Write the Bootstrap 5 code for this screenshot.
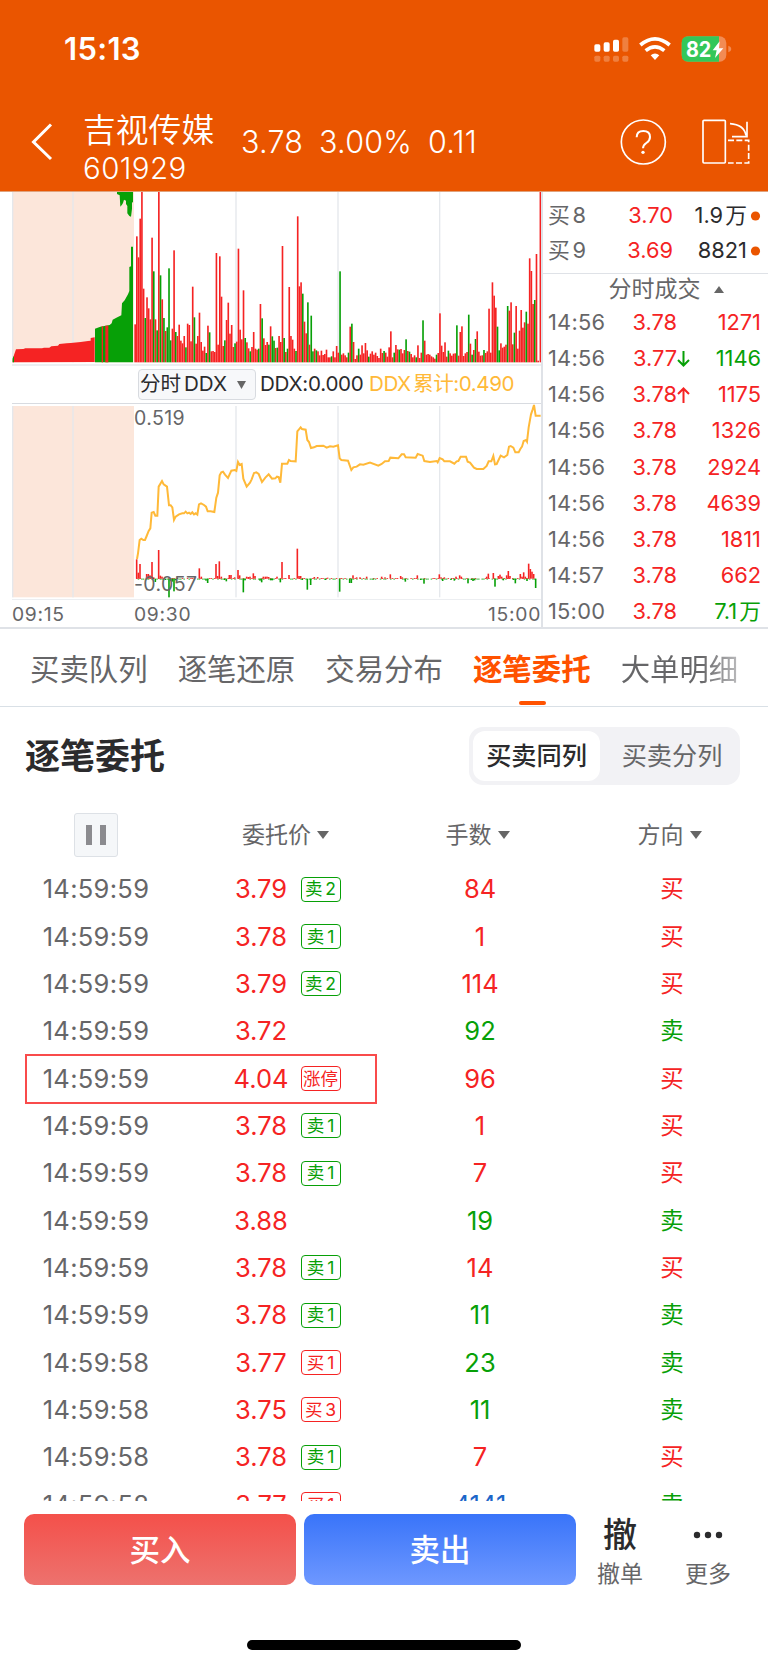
<!DOCTYPE html>
<html lang="zh-CN">
<head>
<meta charset="utf-8">
<meta name="viewport" content="width=device-width, initial-scale=1">
<title>吉视传媒 601929</title>
<link rel="stylesheet" href="https://cdn.jsdelivr.net/npm/bootstrap@5.3.0/dist/css/bootstrap.min.css">
<style>
:root{--up:#f52323;--down:#07a007;--ink:#2b2b2d;--dim:#666668;--rule:#dfe2e7}
body{font-family:Inter,"Noto Sans CJK SC",sans-serif;color:var(--ink);background:#fff;width:768px;height:1663px;overflow:hidden;line-height:1;font-feature-settings:"calt" 0}
svg{display:block;flex:none}
.up{color:var(--up)}.down{color:var(--down)}.dim{color:var(--dim)}.deal{color:#1b66c9}
.app-head{background:#ea5500;height:192px;color:#fff;border-bottom:1px solid #e0a27c}
.status-line{height:95px;padding:2px 36px 0 64px}
.clock{font-size:31px;font-weight:600;letter-spacing:.3px}
.title-line{height:95px;padding:0 16px 2px 31px}
.stock-id{width:158px;padding-top:13px}
.stock-name{font-size:32.8px;line-height:38px;font-family:"Noto Sans CJK SC",sans-serif;font-weight:350}
.stock-code{font-size:29.5px;line-height:38px;letter-spacing:.4px;font-weight:350;padding-top:2px}
.quote{font-size:30.5px;font-weight:350;letter-spacing:.25px;padding-top:2px}
.market{height:437px;border-bottom:2px solid var(--rule)}
.charts{width:543px;padding-left:12px;border-right:2px solid var(--rule)}
.ddx-line{height:39px;border-bottom:1px solid #d8dbe0;border-top:1px solid #eceef1;font-size:20.6px;padding-left:126px;white-space:nowrap;word-spacing:-3px}
.picker{width:118px;height:31px;border:1px solid #d8dbe0;border-radius:4px;background:#f7f8fa;padding:0 9px 0 1px}
.scale-label{font-size:19.5px;color:var(--dim);left:122px;letter-spacing:.4px}
.axis{font-size:19.3px;color:var(--dim);height:28px;border-top:1px solid #eceef1;padding:3px 0 0 0;letter-spacing:.7px}
.axis-first{width:122px}
.tape{width:225px;font-size:21.8px;word-spacing:-4px}
.book{height:82px;border-bottom:1px solid var(--rule);padding-top:6px}
.tape-row{height:36.1px;padding:0 7px 0 5px;white-space:nowrap}
.tape-row .c-time{letter-spacing:.25px}
.book .tape-row{height:35.4px}
.c-time{width:67px}.c-price{width:62px;text-align:right}
.tape-title{height:31px;font-size:23px;padding-left:21px}
.tabs{height:78px;border-bottom:1px solid #d9e0e6;padding-left:30px;font-size:29.4px;gap:30.1px;color:var(--dim);white-space:nowrap;padding-top:4px}
.tab-on{color:#ff5200;font-weight:700}
.tab-on::after{content:"";position:absolute;left:46px;bottom:1px;width:27px;height:4px;border-radius:2px;background:#ff5200}
.tab-fade{background:linear-gradient(90deg,#666668 50%,#666668 68%,#cfcfd1 108%);-webkit-background-clip:text;color:transparent}
.sect{height:98px;padding:0 28px 0 25px}
.sect-title{font-size:35px;font-weight:700}
.seg{width:271px;height:58px;border-radius:14px;background:#f2f2f5;padding:4px;font-size:25.2px;color:var(--dim)}
.seg-on{width:127px;height:50px;border-radius:12px;background:#fff;color:var(--ink);font-weight:500;padding-top:2px}
.cols-head{height:60px;font-size:23px;color:var(--dim)}
.sort{padding-right:5px}
.pause{width:44px;height:44px;border:1px solid #dde1e6;border-radius:3px;background:#f5f7f9;gap:8px}
.pause i{width:6px;height:20px;background:#8b8b8f}
.orders{height:636px;overflow:hidden;font-size:25.5px;padding-top:.4px}
.order{height:47.35px}
.o-time{letter-spacing:.3px}
.o-price{padding-right:11px}
.px{width:71px;text-align:center}
.lvl{width:40px;height:25px;border:1px solid currentColor;border-radius:4px;font-size:17.5px;margin-right:-1px;word-spacing:-2px}
.side{font-size:23.5px}
.ringed{position:absolute;left:25px;top:-1px;width:352px;height:50px;border:2px solid #f94b4b}
.foot{height:163px;padding:13px 0 0 24px}
.act{width:272px;height:71px;border-radius:10px;font-size:30.5px;font-weight:500;color:#fff;padding-top:1px}
.buy{background:linear-gradient(#f4504a,#ed726e)}
.sell{background:linear-gradient(#3974f9,#6e98ff)}
.tool{height:71px;font-size:23px;width:88px;color:var(--dim)}
.tool-top{height:41px;font-size:34px;color:var(--ink);font-weight:500;margin-bottom:8px}
.home-bar{width:274px;height:10px;border-radius:5px;background:#000;margin:55px 0 0 223px}
</style>
</head>
<body>
<header class="app-head">
  <div class="status-line d-flex align-items-center justify-content-between">
    <span class="clock">15:13</span>
    <svg width="138" height="26" viewBox="632 107 414 78">
      <g fill="#fff"><rect x="633" y="132" width="18" height="22" rx="5"/><rect x="661" y="126" width="18" height="28" rx="5"/><rect x="689" y="118" width="18" height="36" rx="5"/></g>
      <g fill="#fff" opacity=".25"><rect x="717" y="111" width="18" height="43" rx="5"/><rect x="633" y="166" width="18" height="18" rx="5"/><rect x="661" y="166" width="18" height="18" rx="5"/><rect x="689" y="166" width="18" height="18" rx="5"/><rect x="717" y="166" width="18" height="18" rx="5"/></g>
      <g fill="none" stroke="#fff" stroke-width="11"><path d="M771 134q44-37 88 0"/><path d="M787 151q28-23 56 0"/></g><path d="M802 165q13-11 26 0l-13 14z" fill="#fff"/>
      <rect x="895" y="108" width="134" height="76" rx="20" fill="#f28b54"/><path d="M915 108h92v76h-92q-20 0-20-20v-36q0-20 20-20z" fill="#34c759"/><path d="M1035 136q9 3 9 10t-9 10z" fill="#f28b54"/>
      <text x="908" y="170" font-size="63" font-weight="700" fill="#fff" textLength="76" lengthAdjust="spacingAndGlyphs">82</text>
      <path d="M1009 123l-21 27h12l-5 23 25-29h-13z" fill="#fff"/>
    </svg>
  </div>
  <div class="title-line d-flex align-items-center">
    <svg width="22" height="38" viewBox="0 0 22 38"><path d="M20 1.500L2.500 19 20 36" fill="none" stroke="#fff" stroke-width="3"/></svg>
    <div class="stock-id ms-auto"><div class="stock-name">吉视传媒</div><div class="stock-code">601929</div></div>
    <span class="quote" style="width:78px">3.78</span><span class="quote" style="width:109px">3.00%</span><span class="quote" style="width:192px">0.11</span>
    <svg width="132" height="48" viewBox="708 354 396 144" fill="none" stroke="#fff" stroke-width="5">
      <circle cx="778" cy="426" r="66"/><path d="M758 412q0-19 20-19t20 18q0 11-11 18-10 7-10 16" stroke-width="6"/><circle cx="777" cy="457" r="5" fill="#fff" stroke="none"/>
      <rect x="957" y="361" width="67" height="128" rx="3"/><path d="M1038 371q42 3 48 35M1044 410h45v-45"/><path d="M1032 421h62v68h-62" stroke-dasharray="18 7"/>
    </svg>
  </div>
</header>

<main>
<section class="market d-flex">
  <div class="charts">
    <svg id="vol" width="529" height="173" viewBox="36 20 1587 519"></svg>
    <div class="ddx-line d-flex align-items-center">
      <span class="picker d-flex align-items-center justify-content-between">分时 DDX <svg width="9" height="8"><path d="M0 0h9L4.500 8z" fill="#666"/></svg></span>
      <span style="margin-left:4px;width:109px;letter-spacing:-.25px">DDX:0.000</span><span style="color:#ffb938;letter-spacing:-.45px">DDX 累计:0.490</span>
    </div>
    <div class="position-relative">
      <svg id="ddx" width="529" height="195" viewBox="36 42 1587 585"></svg>
      <span class="scale-label position-absolute" style="top:5px">0.519</span>
      <span class="scale-label position-absolute" style="top:171px">-0.057</span>
    </div>
    <div class="axis d-flex align-items-center"><span class="axis-first">09:15</span><span>09:30</span><span class="ms-auto">15:00</span></div>
  </div>
  <div class="tape">
    <div class="book">
      <div class="tape-row d-flex align-items-center"><span class="c-time dim">买 8</span><span class="up" style="width:58px;text-align:right">3.70</span><span class="ms-auto">1.9 万</span><svg width="14" height="10"><circle cx="8.500" cy="5" r="4.600" fill="#ea5500"/></svg></div>
      <div class="tape-row d-flex align-items-center"><span class="c-time dim">买 9</span><span class="up" style="width:58px;text-align:right">3.69</span><span class="ms-auto">8821</span><svg width="14" height="10"><circle cx="8.500" cy="5" r="4.600" fill="#ea5500"/></svg></div>
    </div>
    <div class="tape-title dim d-flex align-items-center justify-content-center">分时成交<svg style="margin-left:13px" width="10" height="7"><path d="M0 7h10L5 0z" fill="#666"/></svg></div>
    <div id="ticks"></div>
  </div>
</section>

<nav class="tabs d-flex align-items-center">
  <span>买卖队列</span><span>逐笔还原</span><span>交易分布</span><span class="tab-on position-relative h-100 d-flex align-items-center">逐笔委托</span><span class="tab-fade">大单明细</span>
</nav>

<section>
  <div class="sect d-flex align-items-center justify-content-between">
    <div class="sect-title">逐笔委托</div>
    <div class="seg d-flex"><div class="seg-on d-flex align-items-center justify-content-center">买卖同列</div><div class="flex-fill d-flex align-items-center justify-content-center ps-2" style="padding-top:2px">买卖分列</div></div>
  </div>
  <div class="cols-head row g-0 align-items-center">
    <div class="col-3 d-flex justify-content-center"><span class="pause d-flex align-items-center justify-content-center"><i></i><i></i></span></div>
    <div class="col-3 sort d-flex align-items-center justify-content-center">委托价</div>
    <div class="col-3 sort d-flex align-items-center justify-content-center">手数</div>
    <div class="col-3 sort d-flex align-items-center justify-content-center">方向</div>
  </div>
  <div class="orders" id="orders"></div>
</section>
</main>

<footer class="foot">
  <div class="d-flex">
    <div class="act buy d-flex align-items-center justify-content-center">买入</div>
    <div class="act sell d-flex align-items-center justify-content-center ms-2">卖出</div>
    <div class="tool text-center"><div class="tool-top d-flex align-items-center justify-content-center">撤</div><div>撤单</div></div>
    <div class="tool text-center"><div class="tool-top d-flex align-items-center justify-content-center"><svg width="30" height="8" fill="#2b2b2d"><circle cx="4" cy="4" r="3.200"/><circle cx="15" cy="4" r="3.200"/><circle cx="26" cy="4" r="3.200"/></svg></div><div>更多</div></div>
  </div>
  <div class="home-bar"></div>
</footer>

<script src="https://cdn.jsdelivr.net/npm/bootstrap@5.3.0/dist/js/bootstrap.bundle.min.js"></script>
<script>
const UP='#f52323', DOWN='#07a007';
const rect=(x,y,w,h,c)=>`<rect x="${x}" y="${y}" width="${w}" height="${h}" fill="${c}"/>`;
const grid=(y,h)=>rect(38,y,364,h,'#fce6da')+[36,217,706,1012,1317].map(x=>rect(x,y,4,h,'#e5e8ec')).join('');

// one entry per trading minute: bar top, "g" marks a falling minute
const vol=`417 153 216 100 20 310 398g 336 369 402 157 258g 402 435g 20 270g 342 398g 437 426g 249g 465g 430 195 440g 452 418 466 474 452
486g 415 419 468 304 396g 475 452 382 470 496 484 503g 421 441g 498 497 500 203 478 213 334 482 465g 404 352 445 419 485 474g
469 190 433 462 315 458g 471 489 498g 485 440 490 493 490g 356 399g 459 479 470 478g 423 453g 466g 488 487g 452 470 182 458g 500
490g 305 452 463 490 497g 93 303 291 325g 409 444 351g 478 391g 498g 490 495g 498 510 496 509 506 493 516 516 513g 498 516 482
502 258g 508 504 510 516 502g 424 415g 470 521 510 490g 508 480 504 473 495 514g 505 498 508 502 512 518 490 503 497g 502 514
486 438 516 502g 479 492 493g 491 504 494 462g 497 499g 506 516 510 516g 480 518 502 405g 466 508 506 508 513 516 520 508g 503
384 481 500 471 514 496g 504 511 505 504 420g 511 440 423 512 504 500 388g 475 508g 494 461g 438 499 511 510 494g 503 498 370
502 291 331 367 424g 495g 474 487 484 478 362g 376 351 477 442g 362 490 436 374 427 411 379g 415 219 257 356 344g 206 526 531 20`.split(/\s+/);
let v=grid(20,511);
v+=`<path fill="${DOWN}" d="M351 20h48v30l-3 2v18l-3 24-5-2-6-8v-22l-4-6v-10l-6-3-3 10-3 5-5 6-2-34-8-4z"/>`;
v+=`<path fill="${UP}" d="M38 531v-8l4-14 6-17 22-1 6-2h50l6-2h16l6-4 20-2 4-5 22-2 12-1 30-3 22-3 8-1v-8l12-2v74z"/>`;
v+=`<path fill="${DOWN}" d="M38 531v-12l4-8v20zM285 531V430l16-6 28-5 6-5 3-11 14-7 12-6 2-36 8-9 10-18 4-10V245l5-2V184h6v347z"/>`+rect(305,423,4,108,UP)+rect(316,421,9,110,UP);
vol.forEach((t,i)=>{const y=parseInt(t);v+=rect((403+5.08*i-(i>=239?3.5:0)).toFixed(1),y,4.9,531-y,t.endsWith('g')?DOWN:UP)});
v+=rect(36,536,1587,3,'#eceef1');
document.getElementById('vol').innerHTML=v;

// cumulative DDX line and its per-minute contributions around the zero level
const line='411,507 414,490 419,450 424,446 430,450 435,450 440,438 446,423 451,415 455,368 461,366 466,377 472,377 476,290 486,273 491,283 501,290 507,346 512,346 517,352 522,390 527,380 537,373 547,370 552,370 557,365 562,370 567,368 572,372 577,367 582,373 587,370 592,374 597,343 603,340 612,345 618,350 623,364 632,364 643,366 649,323 654,308 659,256 664,247 669,245 675,254 684,264 694,242 704,240 709,243 714,216 719,225 725,222 730,266 740,290 750,278 755,268 762,249 769,247 776,252 786,276 796,263 806,253 816,266 826,265'
+' 831,260 836,261 841,278 846,221 862,221 867,210 872,213 887,214 892,124 897,118 902,112 906,117 917,119 922,150 927,156 933,174 942,172 950,168 970,167 980,173 990,169 1000,170 1014,166 1019,205 1024,210 1044,212 1054,240 1060,232 1070,230 1080,223 1090,224 1110,218 1135,227 1145,222 1155,214 1166,213 1171,203 1195,205 1205,193 1212,193 1217,202 1247,203 1253,192 1268,197 1273,213 1290,216 1310,213 1313,217 1319,204 1328,208 1333,214 1350,214 1363,221 1370,214 1375,213 1382,200 1398,200 1403,215 1410,218 1422,233 1430,237 1450,237 1460,228 1466,214 1474,214 1480,198 1485,223 1490,222 1502,197 1512,202 1522,195 1527,170 1532,168 1540,173 1546,187 1556,187 1561,177 1566,170 1571,153 1578,150 1581,155 1586,112 1593,73 1598,58 1602,45 1607,77 1622,77';
const net={410:508,415:548,420:522,440:552,445:552,450:556,456:516,461:562,476:480,481:557,486:560,598:535,604:560,648:522,653:558,658:514,664:560,688:555,693:555,704:562,714:540,719:556,740:560,745:561,750:560,760:550,765:558,790:560,796:560,801:560,806:561,831:560,846:516,867:555,892:476,897:558,902:558,943:561,953:561,983:563,1059:556,1070:562,1080:562,1100:560,1145:560,1155:562,1171:553,1202:558,1207:562,1252:556,1318:553,1323:562,1333:562,1368:560,1379:556,1384:560,1460:560,1465:551,1480:549,1495:558,1500:554,1505:560,1520:556,1525:543,1530:558,1561:552,1566:560,1571:547,1576:560,1586:521,1591:537,1596:545,1601:552,
466:576,496:570,507:622,512:572,517:575,522:604,527:571,618:572,623:579,674:570,679:574,730:607,735:571,780:572,785:577,815:570,812:571,817:571,841:577,907:570,922:599,932:585,977:570,1019:605,1049:579,1054:579,1120:569,1216:575,1262:570,1272:581,1328:573,1353:570,1363:572,1404:580,1414:570,1419:573,1424:571,1485:590,1510:571,1540:570,1546:580,1581:573,1607:594};
let d=grid(48,574);
for(let i=0;i<236;i++){const r=(i*7%11)<5;if(i%6!==5)d+=rect((408+5.08*i).toFixed(1),r?564:566,4.600,2.500,r?UP:DOWN)}
for(const k in net){const t=net[k];d+=rect(k-2.4,Math.min(t,566),4.8,Math.abs(t-566),t<566?UP:DOWN)}
d+=`<polyline points="${line}" fill="none" stroke="#ffb938" stroke-width="6"/>`;
document.getElementById('ddx').innerHTML=d;

const arrow={d:`<svg width="13" height="16" fill="none" stroke="${DOWN}" stroke-width="2"><path d="M6.500 0v14M1 9l5.500 5.500L12 9"/></svg>`,u:`<svg width="13" height="16" fill="none" stroke="${UP}" stroke-width="2"><path d="M6.500 16V2M1 7l5.500-5.500L12 7"/></svg>`};
document.getElementById('ticks').innerHTML=[['14:56','3.78','1271'],['14:56','3.77','1146','d'],['14:56','3.78','1175','u'],['14:56','3.78','1326'],['14:56','3.78','2924'],['14:56','3.78','4639'],['14:56','3.78','1811'],['14:57','3.78','662'],['15:00','3.78','7.1 万']]
.map(([t,p,n,a])=>`<div class="tape-row d-flex align-items-center"><span class="c-time dim">${t}</span><span class="c-price up">${p}</span>${a?arrow[a]:''}<span class="ms-auto ${a=='d'||n.includes('万')?'down':'up'}">${n}</span></div>`).join('');

document.querySelectorAll('.sort').forEach(e=>e.insertAdjacentHTML('beforeend','<svg style="margin-left:6px" width="12" height="8"><path d="M0 0h12L6 8z" fill="#666"/></svg>'));

const B='买',S='卖';
document.getElementById('orders').innerHTML=[[59,'3.79','卖 2',84,B],[59,'3.78','卖 1',1,B],[59,'3.79','卖 2',114,B],[59,'3.72','',92,S],[59,'4.04','涨停',96,B],[59,'3.78','卖 1',1,B],[59,'3.78','卖 1',7,B],[59,'3.88','',19,S],[59,'3.78','卖 1',14,B],[59,'3.78','卖 1',11,S],[58,'3.77','买 1',23,S],[58,'3.75','买 3',11,S],[58,'3.78','卖 1',7,B],[58,'3.77','买 1',4141,S]]
.map(([s,p,l,n,w])=>{const c=w==B?'up':'down';return `<div class="order row g-0 align-items-center position-relative"><div class="col-3 o-time dim text-center">14:59:${s}</div><div class="col-3 o-price d-flex align-items-center justify-content-center"><span class="px up">${p}</span>${l?`<span class="lvl ms-1 d-flex align-items-center justify-content-center ${l[0]==S?'down':'up'}">${l}</span>`:'<span style="width:43px"></span>'}</div><div class="col-3 text-center ${n>999?'deal':c}">${n}</div><div class="col-3 text-center side ${c}">${w}</div>${l=='涨停'?'<span class="ringed"></span>':''}</div>`}).join('');
</script>
</body>
</html>
